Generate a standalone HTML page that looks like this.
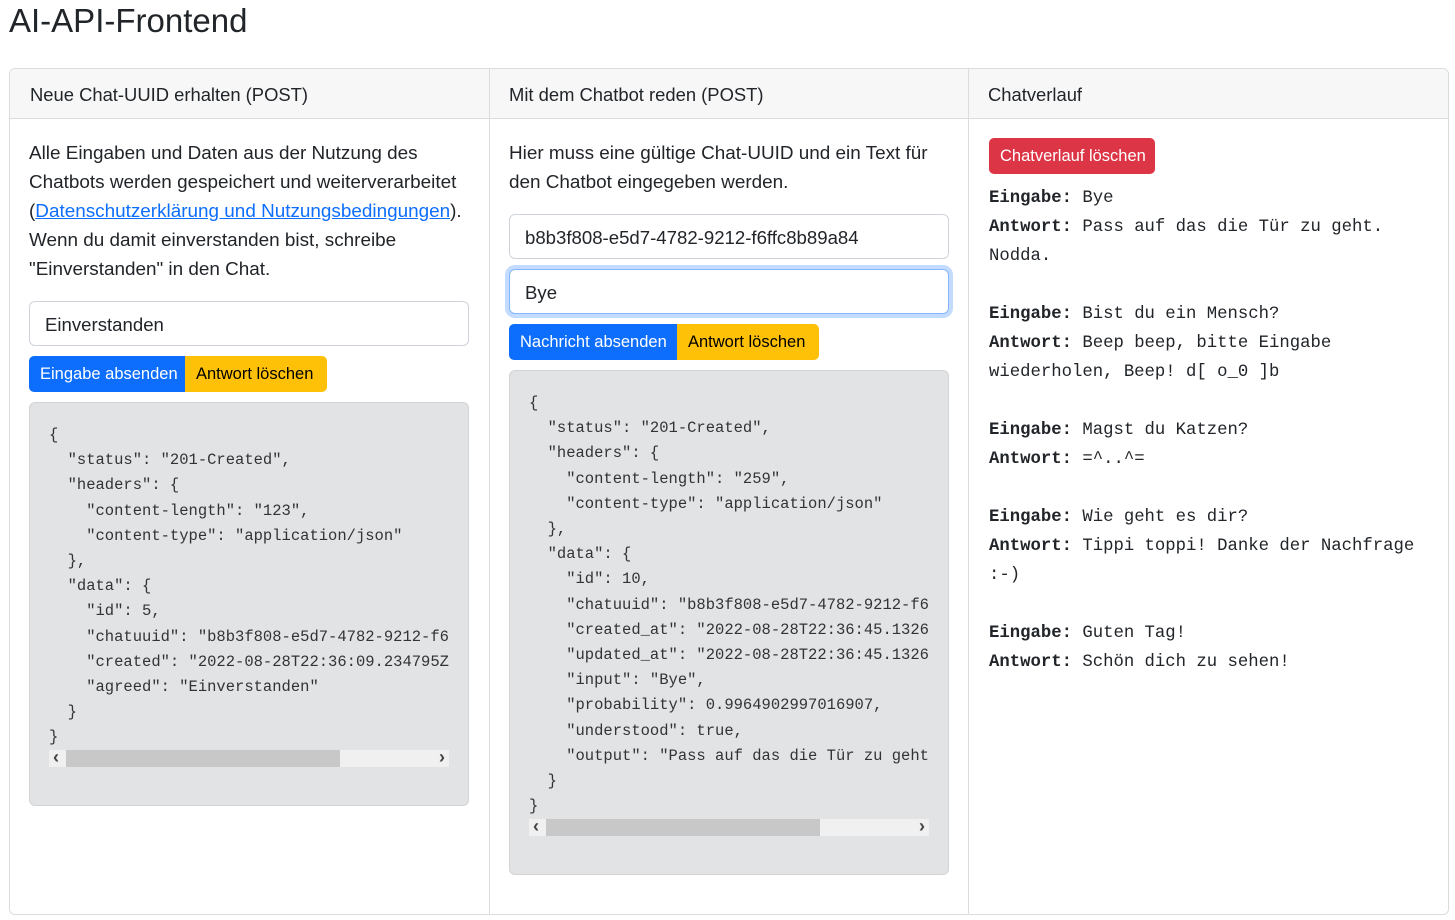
<!DOCTYPE html>
<html><head><meta charset="utf-8"><style>
*{box-sizing:border-box;margin:0;padding:0}
body{width:1455px;height:920px;background:#fff;font-family:"Liberation Sans",sans-serif;color:#212529;position:relative;overflow:hidden}
h1{position:absolute;left:9px;top:0px;font-size:33px;font-weight:400;line-height:42px}
.card{position:absolute;left:9px;top:68px;width:1440px;height:847px;border:1px solid #dcdcdc;border-radius:6px;overflow:hidden}
.hdr{position:absolute;left:0;top:0;width:100%;height:50px;background:#f7f7f7;border-bottom:1px solid #dcdcdc}
.vl{position:absolute;top:0;width:1px;height:100%;background:#dcdcdc}
.ht{position:absolute;top:15px;font-size:18.4px;line-height:22px}
.p{font-size:18.9px;line-height:29px;position:absolute;white-space:nowrap}
.inp{position:absolute;height:45px;border:1px solid #ced4da;border-radius:6px;font-size:18.6px;padding:0 15px;line-height:46px;background:#fff}
.btn{position:absolute;height:36px;font-size:16.5px;line-height:37px;padding:0 11px;white-space:nowrap}
.pre{position:absolute;background:#e2e3e5;border:1px solid #d3d4d6;border-radius:6px;overflow:hidden}
.code{position:absolute;font-family:"Liberation Mono",monospace;font-size:15.5px;line-height:25.2px;white-space:pre;color:#333}
.sb{position:absolute;height:17px;background:#f0f0f0}
.sb .th{position:absolute;left:17px;top:0;height:17px;background:#c8c8c8}
.sb span{position:absolute;top:-2px;font-size:18px;line-height:19px;color:#444;font-weight:bold}
.chat{position:absolute;left:989px;font-family:"Liberation Mono",monospace;font-size:17.3px;line-height:29px;white-space:pre;color:#212529}
</style></head><body>
<h1>AI-API-Frontend</h1>
<div class="card">
<div class="hdr"></div>
<div class="vl" style="left:479px"></div>
<div class="vl" style="left:958px"></div>
<div class="ht" style="left:20px">Neue Chat-UUID erhalten (POST)</div>
<div class="ht" style="left:499px">Mit dem Chatbot reden (POST)</div>
<div class="ht" style="left:978px">Chatverlauf</div>
</div>

<div class="p" style="left:29px;top:139px">Alle Eingaben und Daten aus der Nutzung des<br>Chatbots werden gespeichert und weiterverarbeitet<br>(<span style="color:#0d6efd;text-decoration:underline">Datenschutzerklärung und Nutzungsbedingungen</span>).<br>Wenn du damit einverstanden bist, schreibe<br>"Einverstanden" in den Chat.</div>
<div class="inp" style="left:29px;top:301px;width:440px">Einverstanden</div>
<div class="btn" style="left:29px;top:356px;width:156px;background:#0d6efd;color:#fff;border-radius:5px 0 0 5px">Eingabe absenden</div>
<div class="btn" style="left:185px;top:356px;width:142px;background:#ffc107;color:#000;border-radius:0 5px 5px 0">Antwort löschen</div>
<div class="pre" style="left:29px;top:402px;width:440px;height:404px">
<div class="code" style="left:19px;top:20px;width:400px;overflow:hidden">{
  "status": "201-Created",
  "headers": {
    "content-length": "123",
    "content-type": "application/json"
  },
  "data": {
    "id": 5,
    "chatuuid": "b8b3f808-e5d7-4782-9212-f6ffc8b89a84",
    "created": "2022-08-28T22:36:09.234795Z",
    "agreed": "Einverstanden"
  }
}</div>
<div class="sb" style="left:19px;top:347px;width:400px"><div class="th" style="width:274px"></div><span style="left:4px">&lsaquo;</span><span style="right:4px">&rsaquo;</span></div>
</div>

<div class="p" style="left:509px;top:139px">Hier muss eine gültige Chat-UUID und ein Text für<br>den Chatbot eingegeben werden.</div>
<div class="inp" style="left:509px;top:214px;width:440px">b8b3f808-e5d7-4782-9212-f6ffc8b89a84</div>
<div class="inp" style="left:509px;top:269px;width:440px;border-color:#86b7fe;box-shadow:0 0 0 4px #c2dbfe">Bye</div>
<div class="btn" style="left:509px;top:324px;width:168px;background:#0d6efd;color:#fff;border-radius:5px 0 0 5px">Nachricht absenden</div>
<div class="btn" style="left:677px;top:324px;width:142px;background:#ffc107;color:#000;border-radius:0 5px 5px 0">Antwort löschen</div>
<div class="pre" style="left:509px;top:370px;width:440px;height:505px">
<div class="code" style="left:19px;top:20px;width:400px;overflow:hidden">{
  "status": "201-Created",
  "headers": {
    "content-length": "259",
    "content-type": "application/json"
  },
  "data": {
    "id": 10,
    "chatuuid": "b8b3f808-e5d7-4782-9212-f6ffc8b89a84",
    "created_at": "2022-08-28T22:36:45.132600Z",
    "updated_at": "2022-08-28T22:36:45.132600Z",
    "input": "Bye",
    "probability": 0.9964902997016907,
    "understood": true,
    "output": "Pass auf das die Tür zu geht. Nodda."
  }
}</div>
<div class="sb" style="left:19px;top:448px;width:400px"><div class="th" style="width:274px"></div><span style="left:4px">&lsaquo;</span><span style="right:4px">&rsaquo;</span></div>
</div>

<div class="btn" style="left:989px;top:138px;width:166px;background:#dc3545;color:#fff;border-radius:5px">Chatverlauf löschen</div>
<div class="chat" style="top:184px"><b>Eingabe:</b> Bye
<b>Antwort:</b> Pass auf das die Tür zu geht.
Nodda.

<b>Eingabe:</b> Bist du ein Mensch?
<b>Antwort:</b> Beep beep, bitte Eingabe
wiederholen, Beep! d[ o_0 ]b

<b>Eingabe:</b> Magst du Katzen?
<b>Antwort:</b> =^..^=

<b>Eingabe:</b> Wie geht es dir?
<b>Antwort:</b> Tippi toppi! Danke der Nachfrage
:-)

<b>Eingabe:</b> Guten Tag!
<b>Antwort:</b> Schön dich zu sehen!</div>
</body></html>
